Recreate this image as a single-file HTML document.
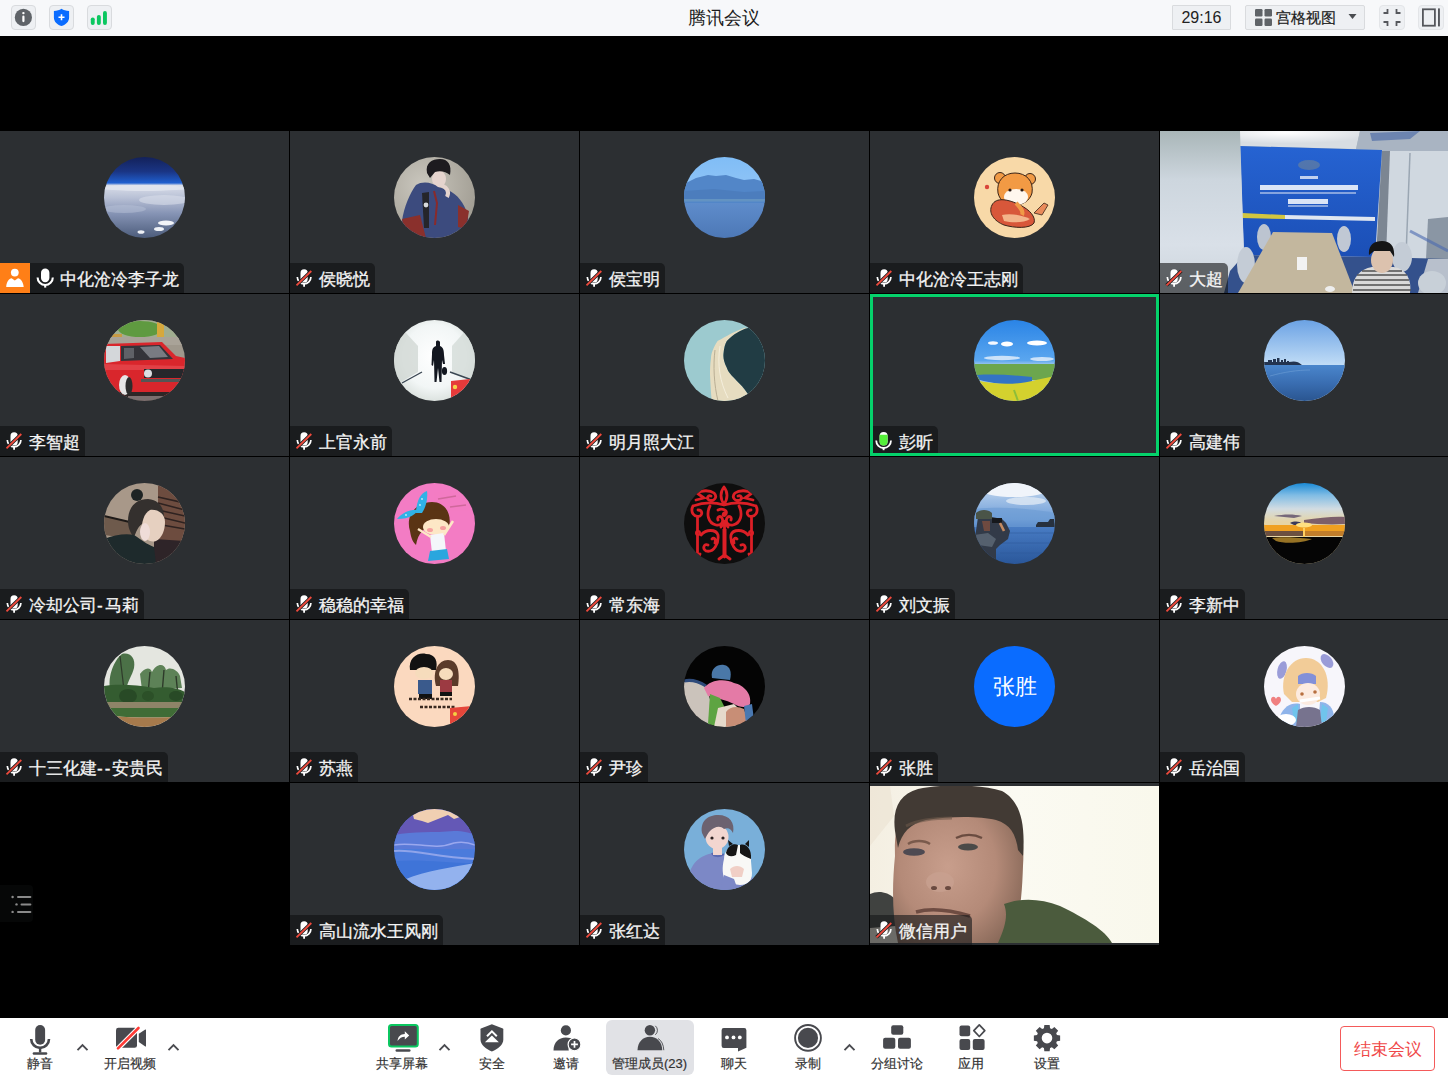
<!DOCTYPE html>
<html><head><meta charset="utf-8">
<style>
*{margin:0;padding:0;box-sizing:border-box}
html,body{width:1448px;height:1076px;overflow:hidden;background:#000;font-family:"Liberation Sans",sans-serif}
.abs{position:absolute}
#top{position:absolute;left:0;top:0;width:1448px;height:36px;background:#f7f8fa}
.tbtn{position:absolute;top:5px;height:25px;background:#eef0f3;border:1px solid #d9dbde;border-radius:4px}
.title{position:absolute;left:0;top:6px;width:1448px;text-align:center;font-size:17.5px;color:#1b1b1b;line-height:24px}
.tile{position:absolute;height:162px;background:#2c2f32;overflow:hidden}
.av{position:absolute;left:50%;margin-left:-40.5px;top:26px;width:81px;height:81px;border-radius:50%;overflow:hidden}
.lab{position:absolute;left:0;bottom:0;height:30px;background:#1a1c1e;border-top-right-radius:5px;padding-left:29px;padding-right:5px;white-space:nowrap}
.lab .mic{position:absolute;left:5px;top:6px}
.lab .nm{display:block;color:#f4f4f4;font-size:17px;line-height:30px;position:relative;top:2px;-webkit-text-stroke:0.3px #f4f4f4}
.lab.host{padding-left:60px}
.lab.host .hostbox{position:absolute;left:0;top:0;width:30px;height:30px;background:#ff7f17}
.lab.host .mic{left:36px;top:5px}
.lab.vid{background:rgba(22,24,26,.62)}
.hl{position:absolute;left:0;top:0;right:0;bottom:0;border:3px solid #05d26b}
#bar{position:absolute;left:0;top:1018px;width:1448px;height:58px;background:#fff}
.bl{position:absolute;top:1054px;font-size:13px;color:#333;line-height:20px;white-space:nowrap;-webkit-text-stroke:0.2px #333}
.caret{position:absolute;top:1043px}
</style></head><body>
<div id="top">
  <div class="tbtn" style="left:11px;width:25px"></div>
  <svg class="abs" style="left:11px;top:5px" width="25" height="25" viewBox="0 0 25 25"><circle cx="12.4" cy="12.4" r="8.6" fill="#5f6368"/><circle cx="12.4" cy="8.1" r="1.2" fill="#fff"/><rect x="11.3" y="10.6" width="2.2" height="6.6" rx="1.1" fill="#fff"/></svg>
  <div class="tbtn" style="left:49px;width:25px"></div>
  <svg class="abs" style="left:49px;top:5px" width="25" height="25" viewBox="0 0 25 25"><path d="M12.5 3.8 C10.5 5.2 8 5.9 4.9 6 V12.5 C4.9 16.6 8 19.7 12.5 21 C17 19.7 20.1 16.6 20.1 12.5 V6 C17 5.9 14.5 5.2 12.5 3.8 Z" fill="#0a6cff"/><path d="M12.5 9.3 V15.2 M9.5 12.3 H15.5" stroke="#fff" stroke-width="1.6"/></svg>
  <div class="tbtn" style="left:87px;width:25px"></div>
  <svg class="abs" style="left:87px;top:5px" width="25" height="25" viewBox="0 0 25 25"><rect x="3.8" y="12.4" width="3.9" height="7.5" rx="1.9" fill="#0bc760"/><rect x="9.9" y="9.9" width="3.9" height="10" rx="1.9" fill="#0bc760"/><rect x="16" y="6" width="3.9" height="13.9" rx="1.9" fill="#0bc760"/></svg>
  <div class="title">腾讯会议</div>
  <div class="tbtn" style="left:1172px;width:59px;border-radius:1px"></div>
  <div class="abs" style="left:1172px;top:5px;width:59px;text-align:center;font-size:16px;line-height:25px;color:#222">29:16</div>
  <div class="tbtn" style="left:1245px;width:120px;border-radius:2px"></div>
  <svg class="abs" style="left:1255px;top:9px" width="18" height="18" viewBox="0 0 18 18"><rect x="0" y="0" width="7.5" height="7.5" rx="1.2" fill="#5f6368"/><rect x="9.5" y="0" width="7.5" height="7.5" rx="1.2" fill="#5f6368"/><rect x="0" y="9.5" width="7.5" height="7.5" rx="1.2" fill="#5f6368"/><rect x="9.5" y="9.5" width="7.5" height="7.5" rx="1.2" fill="#5f6368"/></svg>
  <div class="abs" style="left:1276px;top:5px;font-size:15px;line-height:25px;color:#1b1b1b;-webkit-text-stroke:0.2px #1b1b1b">宫格视图</div>
  <svg class="abs" style="left:1348px;top:13px" width="9" height="7" viewBox="0 0 9 7"><path d="M0.5 1 H8.5 L4.5 6 Z" fill="#4a4c50"/></svg>
  <div class="tbtn" style="left:1379px;width:26px;border-color:#e3e5e8"></div>
  <svg class="abs" style="left:1379px;top:5px" width="26" height="25" viewBox="0 0 26 25"><path d="M8.5 4 V8 H4.5 M17.5 4 V8 H21.5 M8.5 21 V17 H4.5 M17.5 21 V17 H21.5" stroke="#55575c" stroke-width="1.8" fill="none"/></svg>
  <div class="tbtn" style="left:1418px;width:26px;border-color:#e3e5e8"></div>
  <svg class="abs" style="left:1418px;top:5px" width="26" height="25" viewBox="0 0 26 25"><rect x="4.9" y="4.3" width="12" height="16.4" stroke="#55575c" stroke-width="1.8" fill="none"/><rect x="20" y="3.4" width="1.9" height="18" fill="#55575c"/></svg>
</div>

<div class="tile" style="left:0px;top:131px;width:289px"><div class="av"><svg width="81" height="81" viewBox="0 0 81 81"><defs><linearGradient id="eg" x1="0" y1="0" x2="0" y2="1"><stop offset="0" stop-color="#13215a"/><stop offset=".18" stop-color="#1a3584"/><stop offset=".32" stop-color="#1f5fcf"/><stop offset=".35" stop-color="#d9dee9"/><stop offset=".5" stop-color="#b9c1d6"/><stop offset=".7" stop-color="#8593b4"/><stop offset="1" stop-color="#4c5c7b"/></linearGradient></defs><rect width="81" height="81" fill="url(#eg)"/>
<ellipse cx="40" cy="31" rx="45" ry="3" fill="#e2e6ef" opacity=".8"/>
<ellipse cx="60" cy="43" rx="25" ry="5" fill="#d9deea" opacity=".6"/>
<ellipse cx="20" cy="52" rx="22" ry="4" fill="#b8c2d8" opacity=".5"/>
<ellipse cx="62" cy="66" rx="8" ry="2.5" fill="#f2f4f8"/><ellipse cx="55" cy="72" rx="5" ry="2" fill="#eef1f6"/><ellipse cx="37" cy="75" rx="3.5" ry="1.8" fill="#eef1f6"/></svg></div><div class="lab host"><div class="hostbox"><svg width="30" height="30" viewBox="0 0 30 30"><circle cx="14.8" cy="9.6" r="3.9" fill="#fff"/><path d="M6.2 24 C6.5 18.5 9 15.6 11.6 15.2 L14.8 17.6 L18 15.2 C20.6 15.6 23.2 18.5 23.7 24 Z" fill="#fff"/></svg>
</div><svg class="mic" width="20" height="22" viewBox="0 0 20 22"><rect x="5" y="0.6" width="8.4" height="13.6" rx="4.2" fill="#fff"/><path d="M1.6 9.4 A7.6 7.6 0 0 0 16.8 9.4" stroke="#fff" stroke-width="2.1" fill="none"/><path d="M9.2 17 V19.6" stroke="#fff" stroke-width="2.1"/></svg>
<span class="nm">中化沧冷李子龙</span></div></div>
<div class="tile" style="left:290px;top:131px;width:289px"><div class="av"><svg width="81" height="81" viewBox="0 0 81 81"><defs><radialGradient id="bg1" cx=".35" cy=".35" r=".7"><stop offset="0" stop-color="#cac7be"/><stop offset="1" stop-color="#a29e94"/></radialGradient></defs><rect width="81" height="81" fill="url(#bg1)"/>
<ellipse cx="45" cy="22" rx="7" ry="8.5" fill="#e5d4ce"/>
<path d="M33 16 C31 6 38 2 46 2 C54 2 58 8 56 18 C52 15 47 13 41 15 L36 21 Z" fill="#1d1b1f"/>
<path d="M8 64 C10 50 16 36 22 28 C28 24 38 25 44 30 L54 33 C64 38 70 46 73 56 L76 70 L66 81 H14 Z" fill="#3c4b7e"/>
<path d="M8 62 L26 58 L32 81 H12 Z" fill="#8a302c"/><path d="M64 48 L75 54 L72 72 L64 70 Z" fill="#8a302c"/>
<path d="M28 36 L35 35 L35 71 L30 71 Z" fill="#25252a"/><circle cx="32" cy="48" r="2.4" fill="#d8dadc"/>
<path d="M40 34 L43 46 L41 68" stroke="#8a2a2a" stroke-width="2" fill="none"/>
<path d="M47 28 C52 30 56 34 53 40" stroke="#e5d4ce" stroke-width="4" fill="none"/></svg></div><div class="lab"><svg class="mic" width="18" height="20" viewBox="0 0 18 20"><rect x="5.5" y="0.3" width="7.2" height="13.2" rx="3.6" fill="#fff"/><path d="M2.3 8 A6.8 6.8 0 0 0 15.9 8" stroke="#fff" stroke-width="1.7" fill="none"/><path d="M9.1 15 V17.8" stroke="#fff" stroke-width="1.8"/><path d="M1.5 16.3 L16.3 2" stroke="#1a1c1e" stroke-width="3.4"/><path d="M1.5 16.3 L16.3 2" stroke="#ef4a3d" stroke-width="1.8"/></svg>
<span class="nm">侯晓悦</span></div></div>
<div class="tile" style="left:580px;top:131px;width:289px"><div class="av"><svg width="81" height="81" viewBox="0 0 81 81"><defs><linearGradient id="lg" x1="0" y1="0" x2="0" y2="1"><stop offset="0" stop-color="#80bdf6"/><stop offset=".3" stop-color="#8cc2f6"/><stop offset=".55" stop-color="#5f8dcc"/><stop offset="1" stop-color="#4d78b6"/></linearGradient></defs><rect width="81" height="81" fill="url(#lg)"/>
<path d="M0 27 L12 21 L24 18 L32 19 L42 18 L52 21 L60 23 L70 22 L81 25 V46 H0 Z" fill="#5286c8"/>
<path d="M0 34 L30 32 L60 35 L81 34 V44 H0 Z" fill="#4c7dbd"/>
<rect y="42" width="81" height="2.5" fill="#6e9cc4" opacity=".7"/></svg></div><div class="lab"><svg class="mic" width="18" height="20" viewBox="0 0 18 20"><rect x="5.5" y="0.3" width="7.2" height="13.2" rx="3.6" fill="#fff"/><path d="M2.3 8 A6.8 6.8 0 0 0 15.9 8" stroke="#fff" stroke-width="1.7" fill="none"/><path d="M9.1 15 V17.8" stroke="#fff" stroke-width="1.8"/><path d="M1.5 16.3 L16.3 2" stroke="#1a1c1e" stroke-width="3.4"/><path d="M1.5 16.3 L16.3 2" stroke="#ef4a3d" stroke-width="1.8"/></svg>
<span class="nm">侯宝明</span></div></div>
<div class="tile" style="left:870px;top:131px;width:289px"><div class="av"><svg width="81" height="81" viewBox="0 0 81 81"><defs></defs><rect width="81" height="81" fill="#f8d9a8"/>
<circle cx="26" cy="21" r="5.5" fill="#f09a46" stroke="#3a2418" stroke-width="1"/><circle cx="56" cy="22" r="5.5" fill="#f09a46" stroke="#3a2418" stroke-width="1"/>
<path d="M24 36 C22 24 30 16 41 16 C52 16 60 24 58 36 C56 44 48 48 41 48 C32 48 26 44 24 36 Z" fill="#f29a44" stroke="#3a2418" stroke-width="1"/>
<ellipse cx="42" cy="40" rx="12" ry="8" fill="#fff7ee"/>
<circle cx="36" cy="33" r="1.6" fill="#2a1a14"/><circle cx="48" cy="33" r="1.6" fill="#2a1a14"/>
<path d="M18 48 C22 40 34 42 46 48 C56 53 62 60 60 66 C56 72 40 71 30 68 C20 64 14 56 18 48 Z" fill="#d8573a" stroke="#3a2418" stroke-width="1"/>
<path d="M28 58 C36 56 48 58 56 62 C50 66 38 66 30 64 Z" fill="#f3b48a"/>
<path d="M60 56 L70 46 L74 48 L68 58 Z" fill="#e98a5a" stroke="#3a2418" stroke-width=".8"/>
<path d="M42 46 C46 50 50 54 48 58" stroke="#f09a46" stroke-width="4" fill="none"/>
<circle cx="13" cy="30" r="2.2" fill="#d9453a"/></svg></div><div class="lab"><svg class="mic" width="18" height="20" viewBox="0 0 18 20"><rect x="5.5" y="0.3" width="7.2" height="13.2" rx="3.6" fill="#fff"/><path d="M2.3 8 A6.8 6.8 0 0 0 15.9 8" stroke="#fff" stroke-width="1.7" fill="none"/><path d="M9.1 15 V17.8" stroke="#fff" stroke-width="1.8"/><path d="M1.5 16.3 L16.3 2" stroke="#1a1c1e" stroke-width="3.4"/><path d="M1.5 16.3 L16.3 2" stroke="#ef4a3d" stroke-width="1.8"/></svg>
<span class="nm">中化沧冷王志刚</span></div></div>
<div class="tile" style="left:1160px;top:131px;width:288px"><svg class="abs" style="left:0;top:0" width="288" height="162" viewBox="0 0 288 162"><defs>
<linearGradient id="ow" x1="0" y1="0" x2="0" y2="1"><stop offset="0" stop-color="#a9b6b8"/><stop offset=".3" stop-color="#cdd6de"/><stop offset=".7" stop-color="#d9e0e8"/><stop offset="1" stop-color="#ccd4dc"/></linearGradient>
<linearGradient id="ob" x1="0" y1="0" x2="0" y2="1"><stop offset="0" stop-color="#2663d2"/><stop offset="1" stop-color="#1b4fb6"/></linearGradient>
<radialGradient id="ol" cx=".5" cy=".1" r=".6"><stop offset="0" stop-color="#ffffff"/><stop offset="1" stop-color="#d8dde2"/></radialGradient>
</defs>
<rect width="288" height="162" fill="url(#ow)"/>
<path d="M50 0 H200 L196 18 L80 15 Z" fill="url(#ol)"/>
<path d="M200 0 H288 V22 L224 20 L196 18 Z" fill="#a9b4c2"/><path d="M210 2 L260 0 L250 8 L212 10 Z" fill="#6c84b0"/>
<path d="M222 20 H288 V130 L222 126 Z" fill="#d0d8e0"/>
<path d="M222 20 L230 20 L226 126 L216 126 Z" fill="#7c8692"/>
<path d="M250 22 L246 125" stroke="#9aa6b2" stroke-width="1.5"/>
<path d="M268 88 L288 86 V130 L266 128 Z" fill="#8a96a4"/>
<path d="M250 100 L288 120" stroke="#4a6ab0" stroke-width="3" opacity=".6"/>
<path d="M80 15 L222 19 L215 126 L84 124 Z" fill="url(#ob)"/>
<path d="M82 82 L125 84 L125 88 L82 87 Z" fill="#d2c640"/><path d="M125 84 L215 86 L215 90 L125 88 Z" fill="#dfe6f0"/>
<ellipse cx="149" cy="34" rx="11" ry="5" fill="#a8a070" opacity=".35"/>
<rect x="140" y="45" width="18" height="3" fill="#e8eef8" opacity=".8"/>
<rect x="100" y="54" width="98" height="5" fill="#eef3fb" opacity=".9"/><rect x="100" y="61" width="96" height="2" fill="#c8d6f0" opacity=".6"/>
<rect x="128" y="68" width="40" height="5" fill="#eef3fb" opacity=".9"/><rect x="128" y="74" width="40" height="2" fill="#c8d6f0" opacity=".6"/>
<path d="M0 0 H80 L84 124 L70 140 L64 162 H0 Z" fill="url(#ow)"/>

<path d="M84 124 L215 126 L288 128 V162 H64 L70 140 Z" fill="#34518c"/>
<path d="M268 128 L288 128 V162 L258 162 Z" fill="#b8c0cc"/>
<ellipse cx="104" cy="106" rx="7" ry="13" fill="#bcc4d0"/><ellipse cx="184" cy="108" rx="7" ry="13" fill="#c0c8d4"/>
<ellipse cx="86" cy="134" rx="9" ry="18" fill="#c4ccd6"/><ellipse cx="242" cy="126" rx="10" ry="15" fill="#c4ccd6"/>
<ellipse cx="272" cy="152" rx="14" ry="12" fill="#c8d0d8"/>
<path d="M113 101 L172 102 L195 162 L78 162 Z" fill="#c3b79e"/>
<rect x="137" y="126" width="10" height="13" fill="#f2f2f2"/>
<ellipse cx="170" cy="158" rx="5" ry="3" fill="#eeeeee"/>
<path d="M192 162 C192 146 200 138 212 136 L234 136 C246 138 252 148 250 162 Z" fill="#dadada"/>
<path d="M197 144 H247 M195 149 H249 M194 154 H250 M193 159 H251 M202 140 H242" stroke="#505050" stroke-width="1.4"/>
<ellipse cx="222" cy="129" rx="11" ry="13" fill="#dcc2ae"/>
<path d="M209 124 C208 114 214 110 222 110 C231 110 235 116 234 126 L230 120 L214 120 Z" fill="#151515"/>
</svg><div class="lab vid"><svg class="mic" width="18" height="20" viewBox="0 0 18 20"><rect x="5.5" y="0.3" width="7.2" height="13.2" rx="3.6" fill="#fff"/><path d="M2.3 8 A6.8 6.8 0 0 0 15.9 8" stroke="#fff" stroke-width="1.7" fill="none"/><path d="M9.1 15 V17.8" stroke="#fff" stroke-width="1.8"/><path d="M1.5 16.3 L16.3 2" stroke="#1a1c1e" stroke-width="3.4"/><path d="M1.5 16.3 L16.3 2" stroke="#ef4a3d" stroke-width="1.8"/></svg>
<span class="nm">大超</span></div></div>
<div class="tile" style="left:0px;top:294px;width:289px"><div class="av"><svg width="81" height="81" viewBox="0 0 81 81"><defs></defs><rect width="81" height="81" fill="#9f988c"/>
<rect width="81" height="20" fill="#a0ad90"/><ellipse cx="36" cy="9" rx="22" ry="8" fill="#5f9a40"/>
<rect x="53" y="2" width="7" height="20" fill="#d6a83c"/><rect x="8" y="14" width="10" height="8" fill="#c89a44"/>
<rect x="0" y="17" width="81" height="8" fill="#a9a398"/>
<path d="M0 24 L58 22 L72 36 L81 38 V76 H0 Z" fill="#d9262c"/>
<path d="M2 26 L16 26 L16 41 L2 43 Z" fill="#d4d7da"/>
<path d="M17 26 L56 25 L69 39 L17 41 Z" fill="#34343a"/>
<path d="M36 27 L55 26 L64 37 L46 38 Z" fill="#a8acb2" opacity=".6"/><path d="M20 28 L30 28 L30 38 L20 39 Z" fill="#8a8e94" opacity=".5"/>
<path d="M0 44 L81 46 V50 L0 50 Z" fill="#ec5a60" opacity=".5"/>
<rect x="40" y="49" width="41" height="9" fill="#26272b"/><circle cx="44" cy="53.5" r="4" fill="#dcdee2"/>
<rect x="37" y="59" width="44" height="3" fill="#555"/>
<rect x="0" y="72" width="81" height="9" fill="#2e2626"/>
<ellipse cx="21" cy="65" rx="6" ry="10" fill="#e6e6e6"/><ellipse cx="25" cy="66" rx="3.5" ry="9" fill="#2c2c2c"/>
<rect x="24" y="76" width="52" height="5" fill="#7c6f6f"/></svg></div><div class="lab"><svg class="mic" width="18" height="20" viewBox="0 0 18 20"><rect x="5.5" y="0.3" width="7.2" height="13.2" rx="3.6" fill="#fff"/><path d="M2.3 8 A6.8 6.8 0 0 0 15.9 8" stroke="#fff" stroke-width="1.7" fill="none"/><path d="M9.1 15 V17.8" stroke="#fff" stroke-width="1.8"/><path d="M1.5 16.3 L16.3 2" stroke="#1a1c1e" stroke-width="3.4"/><path d="M1.5 16.3 L16.3 2" stroke="#ef4a3d" stroke-width="1.8"/></svg>
<span class="nm">李智超</span></div></div>
<div class="tile" style="left:290px;top:294px;width:289px"><div class="av"><svg width="81" height="81" viewBox="0 0 81 81"><defs><radialGradient id="tg" cx=".5" cy=".45" r=".6"><stop offset="0" stop-color="#ffffff"/><stop offset=".65" stop-color="#f2f6f6"/><stop offset="1" stop-color="#d6ddd9"/></radialGradient></defs><rect width="81" height="81" fill="url(#tg)"/>
<path d="M0 0 L24 26 L24 52 L0 66 Z" fill="#cfd6d2" opacity=".75"/><path d="M81 0 L58 26 L58 52 L81 62 Z" fill="#d2d9d5" opacity=".75"/>
<path d="M8 63 L28 52" stroke="#3a4652" stroke-width="1.4"/><path d="M56 52 L78 60" stroke="#3a4652" stroke-width="1.4"/>
<path d="M42 22 C42 20 45 20 46 22 L46 26 C49 27 50 30 50 35 L51 44 L49 44 L48 40 L47.5 62 L45.5 62 L44 48 L42.5 62 L40.5 62 L40 40 L39 46 L37.5 45 L38 34 C38 29 39 27 42 26 Z" fill="#131720"/>
<ellipse cx="50.5" cy="51" rx="2.6" ry="4" fill="#131720"/>
<path d="M57 61 L76 59 L71 76 L57 80 Z" fill="#e63a3a"/><circle cx="61" cy="67" r="2.2" fill="#f6d24a"/></svg></div><div class="lab"><svg class="mic" width="18" height="20" viewBox="0 0 18 20"><rect x="5.5" y="0.3" width="7.2" height="13.2" rx="3.6" fill="#fff"/><path d="M2.3 8 A6.8 6.8 0 0 0 15.9 8" stroke="#fff" stroke-width="1.7" fill="none"/><path d="M9.1 15 V17.8" stroke="#fff" stroke-width="1.8"/><path d="M1.5 16.3 L16.3 2" stroke="#1a1c1e" stroke-width="3.4"/><path d="M1.5 16.3 L16.3 2" stroke="#ef4a3d" stroke-width="1.8"/></svg>
<span class="nm">上官永前</span></div></div>
<div class="tile" style="left:580px;top:294px;width:289px"><div class="av"><svg width="81" height="81" viewBox="0 0 81 81"><defs></defs><rect width="81" height="81" fill="#9ccacf"/>
<path d="M61 7.7 C48 12 36 20 33.6 21 C29 28 27 34 27 38 C26 45 26 50 26 54.5 C26.5 66 27 74 27.8 81 H70 C68 78 66 76 63.7 73.8 C60 68 56 64 52.9 61 C48 56 44 52 42.8 47.8 C40 42 39 38 39.5 33.6 C40 28 41 24 42.8 21 C50 14 56 10 64 8 Z" fill="#e6dcc0"/>
<path d="M64 8 C56 10 50 14 42.8 21 C41 24 40 28 39.5 33.6 C39 38 40 42 42.8 47.8 C44 52 48 56 52.9 61 C56 64 60 68 63.7 73.8 C66 76 68 78 70 81 H81 V0 Z" fill="#213c44"/>
<path d="M31 30 C29 45 30 65 34 81" stroke="#b9ae94" stroke-width="1" fill="none"/><path d="M36 26 C33 45 36 62 44 78" stroke="#f4eedc" stroke-width="1" fill="none"/></svg></div><div class="lab"><svg class="mic" width="18" height="20" viewBox="0 0 18 20"><rect x="5.5" y="0.3" width="7.2" height="13.2" rx="3.6" fill="#fff"/><path d="M2.3 8 A6.8 6.8 0 0 0 15.9 8" stroke="#fff" stroke-width="1.7" fill="none"/><path d="M9.1 15 V17.8" stroke="#fff" stroke-width="1.8"/><path d="M1.5 16.3 L16.3 2" stroke="#1a1c1e" stroke-width="3.4"/><path d="M1.5 16.3 L16.3 2" stroke="#ef4a3d" stroke-width="1.8"/></svg>
<span class="nm">明月照大江</span></div></div>
<div class="tile" style="left:870px;top:294px;width:289px"><div class="av"><svg width="81" height="81" viewBox="0 0 81 81"><defs><linearGradient id="fg" x1="0" y1="0" x2="0" y2="1"><stop offset="0" stop-color="#2a84e6"/><stop offset=".5" stop-color="#5aa6ef"/><stop offset=".55" stop-color="#9cc6ee"/></linearGradient></defs><rect width="81" height="81" fill="url(#fg)"/>
<ellipse cx="33" cy="24" rx="6" ry="2.5" fill="#fff"/><ellipse cx="63" cy="23" rx="10" ry="2.6" fill="#fff"/><ellipse cx="19" cy="23" rx="5" ry="1.8" fill="#f4f8ff"/>
<ellipse cx="28" cy="38" rx="18" ry="2.2" fill="#e9f1fb" opacity=".8"/><ellipse cx="68" cy="39" rx="12" ry="2" fill="#e9f1fb" opacity=".8"/>
<path d="M0 44 H81 V60 H0 Z" fill="#6ca64e"/>
<path d="M3 55 C20 54 40 55 58 57 L58 63 C40 66 20 64 6 60 Z" fill="#3374c4"/>
<path d="M0 60 C20 64 40 66 62 60 L81 56 V81 H0 Z" fill="#d4d12e"/>
<path d="M40 70 L44 81" stroke="#8cbd3a" stroke-width="2"/></svg></div><div class="lab"><svg class="mic" style="top:5px" width="18" height="20" viewBox="0 0 18 20"><rect x="4.6" y="1" width="8" height="13.4" rx="4" fill="#fff"/><path d="M4.6 3.8 H12.6 V10.4 A4 4 0 0 1 4.6 10.4 Z" fill="#55f03a"/><path d="M1.2 9.6 A7.3 7.3 0 0 0 16 9.6" stroke="#fff" stroke-width="1.8" fill="none"/><path d="M8.6 16.9 V19.2" stroke="#fff" stroke-width="1.9"/></svg>
<span class="nm">彭昕</span></div><div class="hl"></div></div>
<div class="tile" style="left:1160px;top:294px;width:288px"><div class="av"><svg width="81" height="81" viewBox="0 0 81 81"><defs><linearGradient id="sg" x1="0" y1="0" x2="0" y2="1"><stop offset="0" stop-color="#6ba2e4"/><stop offset=".55" stop-color="#c0dcf6"/></linearGradient>
<linearGradient id="sw" x1="0" y1="0" x2="0" y2="1"><stop offset="0" stop-color="#4a86cc"/><stop offset=".5" stop-color="#3a6eb2"/><stop offset="1" stop-color="#2a5590"/></linearGradient></defs><rect width="81" height="81" fill="url(#sg)"/>
<path d="M0 42 H4 V40 H8 V42 H9 V39 H12 V42 H13 V38 H15.5 V42 H17 V40 H19 V42 H20 V39 H22 V42 H23 V41 H25 V42 C30 41 34 41 38 45 H0 Z" fill="#233450"/>
<rect y="45" width="81" height="36" fill="url(#sw)"/>
<path d="M6 56 C20 52 34 50 46 50" stroke="#7aa8dc" stroke-width=".8" fill="none" opacity=".6"/></svg></div><div class="lab"><svg class="mic" width="18" height="20" viewBox="0 0 18 20"><rect x="5.5" y="0.3" width="7.2" height="13.2" rx="3.6" fill="#fff"/><path d="M2.3 8 A6.8 6.8 0 0 0 15.9 8" stroke="#fff" stroke-width="1.7" fill="none"/><path d="M9.1 15 V17.8" stroke="#fff" stroke-width="1.8"/><path d="M1.5 16.3 L16.3 2" stroke="#1a1c1e" stroke-width="3.4"/><path d="M1.5 16.3 L16.3 2" stroke="#ef4a3d" stroke-width="1.8"/></svg>
<span class="nm">高建伟</span></div></div>
<div class="tile" style="left:0px;top:457px;width:289px"><div class="av"><svg width="81" height="81" viewBox="0 0 81 81"><defs></defs><rect width="81" height="81" fill="#a89889"/>
<path d="M54 2 L81 10 V60 L54 60 Z" fill="#6d4c3f"/>
<path d="M54 14 L81 20 M54 20 L81 27 M54 27 L81 33 M56 34 L81 40 M58 42 L81 46" stroke="#2e2220" stroke-width="1.6"/>
<path d="M0 33 L30 40 L30 56 L0 52 Z" fill="#6e5a4c"/><path d="M0 33 L30 40" stroke="#1e1a18" stroke-width="2"/>
<path d="M50 56 L81 58 V81 H50 Z" fill="#2e2428"/>
<circle cx="33" cy="12" r="6" fill="#1e2424"/>
<path d="M24 38 C24 24 32 16 44 16 C56 17 60 26 60 34 L58 44 C54 40 46 38 40 40 C34 42 32 50 30 54 C26 50 24 44 24 38 Z" fill="#34302e"/>
<path d="M46 27 C54 26 61 31 61 39 C61 47 58 55 52 58 C46 60 40 56 38 48 C37 40 40 30 46 27 Z" fill="#e6d0c0"/>
<ellipse cx="41" cy="49" rx="5" ry="9" fill="#efdcd8"/>
<path d="M0 56 C10 52 22 50 30 52 C36 56 44 62 50 64 L52 81 H0 Z" fill="#1e2a2c"/></svg></div><div class="lab"><svg class="mic" width="18" height="20" viewBox="0 0 18 20"><rect x="5.5" y="0.3" width="7.2" height="13.2" rx="3.6" fill="#fff"/><path d="M2.3 8 A6.8 6.8 0 0 0 15.9 8" stroke="#fff" stroke-width="1.7" fill="none"/><path d="M9.1 15 V17.8" stroke="#fff" stroke-width="1.8"/><path d="M1.5 16.3 L16.3 2" stroke="#1a1c1e" stroke-width="3.4"/><path d="M1.5 16.3 L16.3 2" stroke="#ef4a3d" stroke-width="1.8"/></svg>
<span class="nm">冷却公司<span style="letter-spacing:2px">-</span>马莉</span></div></div>
<div class="tile" style="left:290px;top:457px;width:289px"><div class="av"><svg width="81" height="81" viewBox="0 0 81 81"><defs></defs><rect width="81" height="81" fill="#f37cc4"/>
<path d="M16 48 C12 36 18 20 38 19 C52 19 58 32 55 44 L40 42 C30 44 24 50 22 62 C18 58 17 54 16 48 Z" fill="#5a3414"/>
<path d="M22 30 C22 20 26 10 33 8 C34 16 32 24 28 30 Z" fill="#30b2e6"/>
<path d="M3 36 C8 30 16 26 24 27 C22 31 16 36 3 36 Z" fill="#30b2e6"/>
<circle cx="28" cy="16" r=".9" fill="#c8ecfb"/><circle cx="26" cy="22" r=".9" fill="#c8ecfb"/><circle cx="12" cy="32" r=".9" fill="#c8ecfb"/>
<ellipse cx="42" cy="44" rx="13" ry="8" fill="#fde7c6"/>
<ellipse cx="36" cy="47" rx="3" ry="2" fill="#f6a0a0"/><ellipse cx="49" cy="45" rx="3" ry="2" fill="#f6a0a0"/>
<path d="M36 52 L50 50 L52 68 L38 70 Z" fill="#f4f6fa"/><path d="M36 68 L53 66 L55 76 L34 78 Z" fill="#2aa6de"/>
<path d="M50 52 L59 38" stroke="#fde7c6" stroke-width="2.5"/><path d="M37 54 L24 46" stroke="#fde7c6" stroke-width="2.5"/>
<path d="M44 16 L62 13 M56 24 L72 22" stroke="#a4506a" stroke-width="1.6" opacity=".45"/></svg></div><div class="lab"><svg class="mic" width="18" height="20" viewBox="0 0 18 20"><rect x="5.5" y="0.3" width="7.2" height="13.2" rx="3.6" fill="#fff"/><path d="M2.3 8 A6.8 6.8 0 0 0 15.9 8" stroke="#fff" stroke-width="1.7" fill="none"/><path d="M9.1 15 V17.8" stroke="#fff" stroke-width="1.8"/><path d="M1.5 16.3 L16.3 2" stroke="#1a1c1e" stroke-width="3.4"/><path d="M1.5 16.3 L16.3 2" stroke="#ef4a3d" stroke-width="1.8"/></svg>
<span class="nm">稳稳的幸福</span></div></div>
<div class="tile" style="left:580px;top:457px;width:289px"><div class="av"><svg width="81" height="81" viewBox="0 0 81 81"><defs></defs><rect width="81" height="81" fill="#0e0e0e"/>
<path d="M13 10 C18 7 26 7 30 10 C34 14 30 19 25 17 C22 15 24 12 27 13 M13 10 L20 15 L12 17 M68 10 C63 7 55 7 51 10 C47 14 51 19 56 17 C59 15 57 12 54 13 M68 10 L61 15 L69 17 M40 4 C36 9 36 16 40 21 C44 16 44 9 40 4 M9 23 C20 19 30 19 40 22 C50 19 61 19 72 23 M9 23 C6 29 10 35 16 33 C19 31 18 27 14 27 M72 23 C75 29 71 35 65 33 C62 31 63 27 67 27 M13.5 34 V72 M67.5 34 V72 M11 71 L13.5 76 L16 71 M65 71 L67.5 76 L70 71 M26 23 C22 31 24 40 32 42 C37 43 40 39 38 35 C36 32 33 34 34 37 M55 23 C59 31 57 40 49 42 C44 43 41 39 43 35 C45 32 48 34 47 37 M34 27 C38 25 44 27 42 31 C40 34 38 32 40 30 M40.5 40 V74 M37 44 L40.5 39 L44 44 M35 76 L40.5 72 L46 76 M17 52 C22 46 32 46 34 52 C35 60 30 70 22 68 C18 66 20 60 24 62 M64 52 C59 46 49 46 47 52 C46 60 51 70 59 68 C63 66 61 60 57 62 M28 56 C30 54 32 56 31 60 M53 56 C51 54 49 56 50 60" stroke="#dc1f26" stroke-width="2.8" fill="none" stroke-linecap="round"/><rect x="38.5" y="46" width="4" height="26" fill="#dc1f26"/>
<circle cx="14" cy="50" r="2" fill="none" stroke="#dc1f26" stroke-width="2"/><circle cx="67" cy="50" r="2" fill="none" stroke="#dc1f26" stroke-width="2"/></svg></div><div class="lab"><svg class="mic" width="18" height="20" viewBox="0 0 18 20"><rect x="5.5" y="0.3" width="7.2" height="13.2" rx="3.6" fill="#fff"/><path d="M2.3 8 A6.8 6.8 0 0 0 15.9 8" stroke="#fff" stroke-width="1.7" fill="none"/><path d="M9.1 15 V17.8" stroke="#fff" stroke-width="1.8"/><path d="M1.5 16.3 L16.3 2" stroke="#1a1c1e" stroke-width="3.4"/><path d="M1.5 16.3 L16.3 2" stroke="#ef4a3d" stroke-width="1.8"/></svg>
<span class="nm">常东海</span></div></div>
<div class="tile" style="left:870px;top:457px;width:289px"><div class="av"><svg width="81" height="81" viewBox="0 0 81 81"><defs><linearGradient id="so" x1="0" y1="0" x2="0" y2="1"><stop offset="0" stop-color="#d6e2f0"/><stop offset=".2" stop-color="#a0c0e6"/><stop offset=".45" stop-color="#6f9ed8"/><stop offset=".52" stop-color="#4a7ec6"/><stop offset="1" stop-color="#2a579a"/></linearGradient></defs><rect width="81" height="81" fill="url(#so)"/>
<ellipse cx="40" cy="6" rx="34" ry="8" fill="#f0f4fa"/><ellipse cx="52" cy="18" rx="20" ry="4" fill="#dfe8f4" opacity=".8"/>
<path d="M0 26 C20 24 50 24 81 30 V44 H0 Z" fill="#6d9cd4" opacity=".7"/>
<path d="M62 42 L64 39 L74 39 L76 36 L80 36 L81 44 H62 Z" fill="#27313f"/>
<path d="M10 50 H81 M20 60 H81 M26 70 H81" stroke="#2d5796" stroke-width="1" opacity=".5"/>
<path d="M4 34 C4 30 8 28 12 28 C16 28 18 30 18 34 L28 36 L32 40 L36 48 L34 56 L26 62 L22 66 L22 81 H6 L0 62 L2 48 Z" fill="#323a48"/>
<path d="M2 30 C6 26 14 26 18 30 L18 36 L2 36 Z" fill="#4a5448"/>
<path d="M8 38 L16 38 L16 48 L10 48 Z" fill="#6e4a40"/>
<rect x="18" y="35" width="10" height="5" fill="#16181c"/>
<path d="M0 52 L14 50 L22 56 L18 64 L4 62 Z" fill="#5e6a78" opacity=".8"/>
<path d="M26 40 L30 48" stroke="#c48a60" stroke-width="2.6"/></svg></div><div class="lab"><svg class="mic" width="18" height="20" viewBox="0 0 18 20"><rect x="5.5" y="0.3" width="7.2" height="13.2" rx="3.6" fill="#fff"/><path d="M2.3 8 A6.8 6.8 0 0 0 15.9 8" stroke="#fff" stroke-width="1.7" fill="none"/><path d="M9.1 15 V17.8" stroke="#fff" stroke-width="1.8"/><path d="M1.5 16.3 L16.3 2" stroke="#1a1c1e" stroke-width="3.4"/><path d="M1.5 16.3 L16.3 2" stroke="#ef4a3d" stroke-width="1.8"/></svg>
<span class="nm">刘文振</span></div></div>
<div class="tile" style="left:1160px;top:457px;width:288px"><div class="av"><svg width="81" height="81" viewBox="0 0 81 81"><defs><linearGradient id="su" x1="0" y1="0" x2="0" y2="1"><stop offset="0" stop-color="#1a8ad6"/><stop offset=".15" stop-color="#80bce4"/><stop offset=".32" stop-color="#d2dce2"/><stop offset=".48" stop-color="#e6d4a4"/></linearGradient></defs><rect width="81" height="81" fill="url(#su)"/>
<path d="M10 33 C20 31 30 31 38 33 L30 35 Z" fill="#5c4c68" opacity=".8"/>
<path d="M40 37 C56 35 70 33 81 34 V41 C66 42 52 41 40 40 Z" fill="#6a4a5e" opacity=".85"/>
<path d="M26 40 C30 38 36 38 38 41 L32 43 Z" fill="#3c3a5a"/>
<path d="M0 42 H81 V50 H0 Z" fill="#f0a020"/><ellipse cx="40" cy="42" rx="8" ry="2.5" fill="#ffe080"/>
<path d="M0 48 H81 V53 H0 Z" fill="#6c5040"/><path d="M40 48 H81 V53 H40 Z" fill="#d88a24" opacity=".8"/>
<rect x="39" y="45" width="2" height="9" fill="#ffd060"/>
<rect y="54" width="81" height="27" fill="#050505"/>
<path d="M8 55 C14 54 30 54 48 56 C40 60 20 61 12 58 Z" fill="#c89830" opacity=".75"/></svg></div><div class="lab"><svg class="mic" width="18" height="20" viewBox="0 0 18 20"><rect x="5.5" y="0.3" width="7.2" height="13.2" rx="3.6" fill="#fff"/><path d="M2.3 8 A6.8 6.8 0 0 0 15.9 8" stroke="#fff" stroke-width="1.7" fill="none"/><path d="M9.1 15 V17.8" stroke="#fff" stroke-width="1.8"/><path d="M1.5 16.3 L16.3 2" stroke="#1a1c1e" stroke-width="3.4"/><path d="M1.5 16.3 L16.3 2" stroke="#ef4a3d" stroke-width="1.8"/></svg>
<span class="nm">李新中</span></div></div>
<div class="tile" style="left:0px;top:620px;width:289px"><div class="av"><svg width="81" height="81" viewBox="0 0 81 81"><defs></defs><rect width="81" height="81" fill="#e4e6e0"/>
<path d="M6 42 C4 30 10 14 18 8 C26 6 32 12 30 22 C28 30 24 34 22 44 Z" fill="#3a6436" opacity=".9"/>
<path d="M16 10 L20 44" stroke="#2e3a2a" stroke-width="1.2"/>
<path d="M36 28 C40 22 46 20 48 26 C52 18 60 16 62 24 C66 20 74 24 76 30 L78 42 L38 44 Z" fill="#45703e" opacity=".85"/>
<path d="M46 26 L44 48 M60 24 L58 48 M72 30 L74 50" stroke="#2e3a2a" stroke-width="1.4"/>
<path d="M0 40 C10 38 30 38 50 42 C62 40 74 42 81 46 V62 H0 Z" fill="#345c30"/>
<ellipse cx="24" cy="50" rx="9" ry="7" fill="#284a26"/><ellipse cx="72" cy="50" rx="7" ry="5" fill="#284a26"/><ellipse cx="44" cy="50" rx="6" ry="5" fill="#2c5028"/>
<rect y="56" width="81" height="6" fill="#8e8468"/>
<path d="M6 62 H81 V70 C60 72 30 72 10 70 Z" fill="#406c36"/>
<path d="M10 70 C30 72 60 72 81 70 V81 H10 Z" fill="#a67a4c"/></svg></div><div class="lab"><svg class="mic" width="18" height="20" viewBox="0 0 18 20"><rect x="5.5" y="0.3" width="7.2" height="13.2" rx="3.6" fill="#fff"/><path d="M2.3 8 A6.8 6.8 0 0 0 15.9 8" stroke="#fff" stroke-width="1.7" fill="none"/><path d="M9.1 15 V17.8" stroke="#fff" stroke-width="1.8"/><path d="M1.5 16.3 L16.3 2" stroke="#1a1c1e" stroke-width="3.4"/><path d="M1.5 16.3 L16.3 2" stroke="#ef4a3d" stroke-width="1.8"/></svg>
<span class="nm">十三化建<span style="letter-spacing:2px">-</span><span style="letter-spacing:2px">-</span>安贵民</span></div></div>
<div class="tile" style="left:290px;top:620px;width:289px"><div class="av"><svg width="81" height="81" viewBox="0 0 81 81"><defs></defs><rect width="81" height="81" fill="#fbd9bf"/>
<path d="M16 24 C14 12 24 6 32 8 C42 8 44 16 42 24 Z" fill="#121212"/>
<ellipse cx="30" cy="27" rx="9" ry="6" fill="#f6dcbc"/>
<path d="M42 40 C38 26 44 14 54 14 C64 14 66 26 64 40 Z" fill="#5b3b2a"/>
<ellipse cx="52" cy="28" rx="7" ry="6" fill="#f6dcbc"/>
<path d="M24 34 L38 34 L38 48 L24 48 Z" fill="#3a5a8c"/><rect x="25" y="48" width="13" height="5" fill="#111"/>
<path d="M46 34 L58 34 L58 46 L46 46 Z" fill="#9c3a42"/><rect x="46" y="46" width="12" height="4" fill="#111"/>
<path d="M15 53 H58 M26 61 H62" stroke="#3a2a20" stroke-width="2.4" stroke-dasharray="3 1.5"/>
<path d="M56 62 L78 60 L70 80 L56 80 Z" fill="#e5463a"/><circle cx="61" cy="68" r="2" fill="#f4cf42"/></svg></div><div class="lab"><svg class="mic" width="18" height="20" viewBox="0 0 18 20"><rect x="5.5" y="0.3" width="7.2" height="13.2" rx="3.6" fill="#fff"/><path d="M2.3 8 A6.8 6.8 0 0 0 15.9 8" stroke="#fff" stroke-width="1.7" fill="none"/><path d="M9.1 15 V17.8" stroke="#fff" stroke-width="1.8"/><path d="M1.5 16.3 L16.3 2" stroke="#1a1c1e" stroke-width="3.4"/><path d="M1.5 16.3 L16.3 2" stroke="#ef4a3d" stroke-width="1.8"/></svg>
<span class="nm">苏燕</span></div></div>
<div class="tile" style="left:580px;top:620px;width:289px"><div class="av"><svg width="81" height="81" viewBox="0 0 81 81"><defs></defs><rect width="81" height="81" fill="#040404"/>
<path d="M28 32 C26 22 34 18 40 19 C46 20 48 26 46 34 Z" fill="#4a78a8"/>
<path d="M0 36 L10 34 L22 40 L28 60 L26 81 H0 Z" fill="#cbc3bb"/>
<path d="M0 35 C8 33 14 35 22 40" stroke="#2e4a7a" stroke-width="3" fill="none"/>
<path d="M20 42 C26 34 40 32 50 37 C60 39 68 48 66 58 C64 62 56 62 50 58 C42 54 32 52 24 50 Z" fill="#e47aa6"/>
<path d="M26 48 L36 52 L40 60 L34 81 L24 78 Z" fill="#5ea442"/>
<path d="M34 62 L50 58 L58 66 L52 81 L30 81 Z" fill="#e6dacb"/>
<path d="M42 66 C46 60 54 60 60 63 L64 76 L54 81 L42 81 Z" fill="#c88e76"/>
<path d="M60 60 L68 58 L70 74 L62 78 Z" fill="#4a78b0"/></svg></div><div class="lab"><svg class="mic" width="18" height="20" viewBox="0 0 18 20"><rect x="5.5" y="0.3" width="7.2" height="13.2" rx="3.6" fill="#fff"/><path d="M2.3 8 A6.8 6.8 0 0 0 15.9 8" stroke="#fff" stroke-width="1.7" fill="none"/><path d="M9.1 15 V17.8" stroke="#fff" stroke-width="1.8"/><path d="M1.5 16.3 L16.3 2" stroke="#1a1c1e" stroke-width="3.4"/><path d="M1.5 16.3 L16.3 2" stroke="#ef4a3d" stroke-width="1.8"/></svg>
<span class="nm">尹珍</span></div></div>
<div class="tile" style="left:870px;top:620px;width:289px"><div class="av" style="background:#0a6cff;color:#fff;font-size:22px;text-align:center;line-height:81px">张胜</div><div class="lab"><svg class="mic" width="18" height="20" viewBox="0 0 18 20"><rect x="5.5" y="0.3" width="7.2" height="13.2" rx="3.6" fill="#fff"/><path d="M2.3 8 A6.8 6.8 0 0 0 15.9 8" stroke="#fff" stroke-width="1.7" fill="none"/><path d="M9.1 15 V17.8" stroke="#fff" stroke-width="1.8"/><path d="M1.5 16.3 L16.3 2" stroke="#1a1c1e" stroke-width="3.4"/><path d="M1.5 16.3 L16.3 2" stroke="#ef4a3d" stroke-width="1.8"/></svg>
<span class="nm">张胜</span></div></div>
<div class="tile" style="left:1160px;top:620px;width:288px"><div class="av"><svg width="81" height="81" viewBox="0 0 81 81"><defs></defs><rect width="81" height="81" fill="#f7f6fb"/>
<ellipse cx="18" cy="24" rx="4.5" ry="9" fill="#9a9cd8" transform="rotate(15 18 24)"/><ellipse cx="63" cy="15" rx="5" ry="8" fill="#9a9cd8" transform="rotate(-40 63 15)"/>
<path d="M20 48 C16 30 26 12 42 12 C58 12 68 30 62 52 L54 56 L28 56 Z" fill="#f2cc98"/>
<path d="M34 30 C38 26 48 26 52 30 L52 38 L34 38 Z" fill="#8290d8"/>
<ellipse cx="44" cy="48" rx="12" ry="11" fill="#fcebe0"/>
<circle cx="38" cy="48" r="1.8" fill="#b87040"/><circle cx="51" cy="46" r="1.8" fill="#b87040"/>
<path d="M36 55 L56 52" stroke="#ffffff" stroke-width="3"/>
<path d="M16 70 C20 60 28 56 36 58 L36 81 H20 Z" fill="#8fb4ea"/><path d="M56 56 C64 56 70 62 70 72 L66 81 H54 Z" fill="#8fb4ea"/>
<path d="M28 62 L34 58 L36 76 L30 76 Z M58 58 L64 62 L62 76 L56 76 Z" fill="#70c4ec"/>
<path d="M34 64 C40 60 50 60 56 64 L58 81 H32 Z" fill="#77738e"/>
<ellipse cx="22" cy="74" rx="10" ry="6" fill="#ffffff"/>
<path d="M7 54 C7 50 11 50 12 53 C13 50 17 50 17 54 C17 57 12 60 12 60 C12 60 7 57 7 54 Z" fill="#f08080"/></svg></div><div class="lab"><svg class="mic" width="18" height="20" viewBox="0 0 18 20"><rect x="5.5" y="0.3" width="7.2" height="13.2" rx="3.6" fill="#fff"/><path d="M2.3 8 A6.8 6.8 0 0 0 15.9 8" stroke="#fff" stroke-width="1.7" fill="none"/><path d="M9.1 15 V17.8" stroke="#fff" stroke-width="1.8"/><path d="M1.5 16.3 L16.3 2" stroke="#1a1c1e" stroke-width="3.4"/><path d="M1.5 16.3 L16.3 2" stroke="#ef4a3d" stroke-width="1.8"/></svg>
<span class="nm">岳治国</span></div></div>
<div class="tile" style="left:290px;top:783px;width:289px"><div class="av"><svg width="81" height="81" viewBox="0 0 81 81"><defs></defs><rect width="81" height="81" fill="#4b7bdc"/>
<rect width="81" height="26" fill="#6458b6"/>
<path d="M18 2 C30 -2 60 -2 66 8 L60 10 L54 6 L44 10 L34 14 L28 12 L20 10 Z" fill="#f0cfb2"/>
<path d="M0 26 C20 22 40 24 60 22 C70 22 76 24 81 26 V40 H0 Z" fill="#5a7ad8"/>
<path d="M0 36 C20 32 40 42 60 34 C70 32 76 34 81 36" stroke="#9aa8ee" stroke-width="1.5" fill="none"/>
<path d="M0 42 C20 40 40 48 81 50" stroke="#8fa4ea" stroke-width="2" fill="none"/>
<path d="M0 52 C30 50 50 54 81 54 V81 H0 Z" fill="#3f74d8"/>
<path d="M12 70 C30 62 60 58 81 54 V81 H12 Z" fill="#93b2ee"/></svg></div><div class="lab"><svg class="mic" width="18" height="20" viewBox="0 0 18 20"><rect x="5.5" y="0.3" width="7.2" height="13.2" rx="3.6" fill="#fff"/><path d="M2.3 8 A6.8 6.8 0 0 0 15.9 8" stroke="#fff" stroke-width="1.7" fill="none"/><path d="M9.1 15 V17.8" stroke="#fff" stroke-width="1.8"/><path d="M1.5 16.3 L16.3 2" stroke="#1a1c1e" stroke-width="3.4"/><path d="M1.5 16.3 L16.3 2" stroke="#ef4a3d" stroke-width="1.8"/></svg>
<span class="nm">高山流水王风刚</span></div></div>
<div class="tile" style="left:580px;top:783px;width:289px"><div class="av"><svg width="81" height="81" viewBox="0 0 81 81"><defs></defs><rect width="81" height="81" fill="#79afd9"/>
<path d="M4 72 C6 54 16 46 30 44 C40 44 48 48 52 56 L70 70 L66 81 H8 Z" fill="#7c88c6"/>
<path d="M28 44 C30 48 36 48 40 45" stroke="#5a68b0" stroke-width="2" fill="none"/>
<rect x="29" y="37" width="9" height="9" fill="#f2d6d0"/>
<ellipse cx="33" cy="28" rx="11.5" ry="12" fill="#f2d6d0"/>
<path d="M18 24 C16 12 24 6 34 6 C46 6 51 14 49 24 C47 20 44 18 40 20 C36 16 30 18 26 22 C24 24 22 28 21 30 Z" fill="#6c6270"/>
<circle cx="28" cy="29" r="1.6" fill="#2a2020"/><circle cx="39" cy="29" r="1.6" fill="#2a2020"/>
<path d="M40 50 C40 42 46 36 54 36 C62 36 68 42 67 52 L68 64 C68 72 64 76 56 76 L42 74 C38 66 38 58 40 50 Z" fill="#f8f8f6"/>
<path d="M42 44 C44 36 50 34 54 36 L52 46 C48 48 44 48 42 44 Z M56 36 C62 34 68 40 67 50 C62 48 58 46 56 44 Z" fill="#151515"/>
<path d="M45 37 L44 31 L49 35 Z M61 35 L65 31 L65 38 Z" fill="#151515"/>
<path d="M46 60 C50 56 56 56 60 60 L58 68 L48 68 Z" fill="#f0cfc6"/>
<path d="M40 66 L50 70 L54 81 H36 Z" fill="#7c88c6"/></svg></div><div class="lab"><svg class="mic" width="18" height="20" viewBox="0 0 18 20"><rect x="5.5" y="0.3" width="7.2" height="13.2" rx="3.6" fill="#fff"/><path d="M2.3 8 A6.8 6.8 0 0 0 15.9 8" stroke="#fff" stroke-width="1.7" fill="none"/><path d="M9.1 15 V17.8" stroke="#fff" stroke-width="1.8"/><path d="M1.5 16.3 L16.3 2" stroke="#1a1c1e" stroke-width="3.4"/><path d="M1.5 16.3 L16.3 2" stroke="#ef4a3d" stroke-width="1.8"/></svg>
<span class="nm">张红达</span></div></div>
<div class="tile" style="left:870px;top:783px;width:289px"><svg class="abs" style="left:0;top:3px" width="289" height="157" viewBox="0 0 289 157"><defs>
<radialGradient id="fs" cx=".42" cy=".5" r=".62"><stop offset="0" stop-color="#c89e8c"/><stop offset=".6" stop-color="#b48a78"/><stop offset="1" stop-color="#8a6a5a"/></radialGradient>
<linearGradient id="fb" x1="0" y1="0" x2="1" y2="0"><stop offset="0" stop-color="#f4efe2"/><stop offset=".5" stop-color="#fbfaf2"/><stop offset="1" stop-color="#f9f8ec"/></linearGradient>
</defs>
<rect width="289" height="157" fill="url(#fb)"/>
<path d="M0 0 L20 0 L24 30 L0 60 Z" fill="#ece4d4" opacity=".7"/>
<path d="M0 108 C8 104 18 106 24 112 L26 140 L0 142 Z" fill="#404240"/>
<path d="M28 157 C22 130 22 100 25 70 C24 40 30 20 48 12 C70 2 110 2 130 12 C150 24 155 50 153 80 C152 110 150 135 140 157 Z" fill="url(#fs)"/>
<path d="M25 45 C22 22 30 8 48 3 C70 -2 110 -2 132 5 C148 14 156 32 153 70 L148 64 C146 48 140 38 126 34 C110 30 80 30 56 34 C40 38 32 46 28 62 Z" fill="#423a34"/>
<path d="M36 40 C48 34 64 32 82 32" stroke="#6a564a" stroke-width="3" fill="none" opacity=".6"/>
<ellipse cx="44" cy="66" rx="11" ry="3.8" fill="#4e4a52"/><ellipse cx="98" cy="61" rx="10" ry="3.5" fill="#4a4a48"/>
<path d="M38 58 C44 54 54 54 60 58" stroke="#7a5a4c" stroke-width="2.5" fill="none"/><path d="M86 52 C94 48 104 48 112 52" stroke="#6a4c40" stroke-width="2.5" fill="none"/>
<ellipse cx="70" cy="96" rx="14" ry="10" fill="#c8a090" opacity=".8"/>
<ellipse cx="64" cy="102" rx="3" ry="2" fill="#6a4a40"/><ellipse cx="78" cy="102" rx="3" ry="2" fill="#6a4a40"/>
<path d="M46 126 C60 122 80 124 100 130" stroke="#6e4c42" stroke-width="3.5" fill="none"/>
<path d="M134 118 C150 112 170 112 190 120 C215 132 236 145 242 157 H128 C136 140 138 128 134 118 Z" fill="#4b5b3d"/>
</svg><div class="lab vid"><svg class="mic" width="18" height="20" viewBox="0 0 18 20"><rect x="5.5" y="0.3" width="7.2" height="13.2" rx="3.6" fill="#fff"/><path d="M2.3 8 A6.8 6.8 0 0 0 15.9 8" stroke="#fff" stroke-width="1.7" fill="none"/><path d="M9.1 15 V17.8" stroke="#fff" stroke-width="1.8"/><path d="M1.5 16.3 L16.3 2" stroke="#1a1c1e" stroke-width="3.4"/><path d="M1.5 16.3 L16.3 2" stroke="#ef4a3d" stroke-width="1.8"/></svg>
<span class="nm">微信用户</span></div></div>

<div class="abs" style="left:0;top:885px;width:33px;height:37px;background:#060707;border-radius:0 4px 4px 0"></div>
<svg class="abs" style="left:8px;top:892px" width="28" height="24" viewBox="0 0 28 24"><g fill="#8a8a8a"><circle cx="4.6" cy="5" r="1.2"/><rect x="9" y="4" width="14.4" height="2" rx="1"/><circle cx="8.5" cy="12.4" r="1.2"/><rect x="12.5" y="11.4" width="10.9" height="2" rx="1"/><circle cx="4.6" cy="19.9" r="1.2"/><rect x="9" y="18.9" width="14.4" height="2" rx="1"/></g></svg>

<div id="bar"></div>
<svg class="abs" style="left:20px;top:1022px" width="40" height="36" viewBox="0 0 40 36"><rect x="15.2" y="3" width="9.9" height="19.8" rx="4.95" fill="#48494e"/><path d="M11.2 17 A8.9 8.9 0 0 0 29 17" stroke="#48494e" stroke-width="2.6" fill="none"/><path d="M20.1 26 V30.5" stroke="#48494e" stroke-width="2.4"/><rect x="12.7" y="30.3" width="14.6" height="2.5" rx="1.2" fill="#48494e"/></svg>
<div class="bl" style="left:27px">静音</div>
<svg class="caret" style="left:76px" width="13" height="9" viewBox="0 0 13 9"><path d="M1.5 7.2 L6.5 2.2 L11.5 7.2" stroke="#4a4b50" stroke-width="1.9" fill="none"/></svg>

<svg class="abs" style="left:110px;top:1022px" width="40" height="30" viewBox="0 0 40 30"><rect x="6" y="5.8" width="21" height="20" rx="2.4" fill="#48494e"/><path d="M28.8 11.8 L35.3 7.5 Q36 7.2 36 8 V24 Q36 24.8 35.3 24.4 L28.8 20 Z" fill="#48494e"/><path d="M7.5 27 L29 5.5" stroke="#fff" stroke-width="4.8"/><path d="M8 26.4 L28.5 6" stroke="#ff3b35" stroke-width="2.6" stroke-linecap="round"/></svg>
<div class="bl" style="left:104px">开启视频</div>
<svg class="caret" style="left:167px" width="13" height="9" viewBox="0 0 13 9"><path d="M1.5 7.2 L6.5 2.2 L11.5 7.2" stroke="#4a4b50" stroke-width="1.9" fill="none"/></svg>

<svg class="abs" style="left:385px;top:1020px" width="36" height="34" viewBox="0 0 36 34"><rect x="4" y="5" width="28.8" height="21.6" rx="2.6" fill="#48494e" stroke="#0bc760" stroke-width="2"/><rect x="10.5" y="29.2" width="15" height="2.5" rx="1.25" fill="#48494e"/><path d="M12.5 21 C13 16.5 15.5 14.2 19.8 14 V11.3 L24.2 15.4 L19.8 19.5 V16.8 C16.8 16.8 14.5 18.3 12.5 21 Z" fill="#fff"/></svg>
<div class="bl" style="left:376px">共享屏幕</div>
<svg class="caret" style="left:438px" width="13" height="9" viewBox="0 0 13 9"><path d="M1.5 7.2 L6.5 2.2 L11.5 7.2" stroke="#4a4b50" stroke-width="1.9" fill="none"/></svg>

<svg class="abs" style="left:476px;top:1020px" width="32" height="34" viewBox="0 0 32 34"><path d="M15.9 4.2 L26.9 8.6 Q27.3 8.8 27.3 9.2 V19.5 C27.3 25 22 29 15.9 31.4 C9.8 29 4.5 25 4.5 19.5 V9.2 Q4.5 8.8 4.9 8.6 Z" fill="#48494e"/><path d="M11 16.2 L15.9 11.4 L20.8 16.2 M11.4 21.2 L15.9 16.8 L20.4 21.2 Z" stroke="#fff" stroke-width="2" fill="none"/><path d="M11.4 21.2 L15.9 16.8 L20.4 21.2 Z" fill="#fff"/></svg>
<div class="bl" style="left:479px">安全</div>

<svg class="abs" style="left:550px;top:1020px" width="34" height="34" viewBox="0 0 34 34"><circle cx="15.9" cy="10.4" r="5.1" fill="#48494e"/><path d="M3.5 30.4 C3.7 22.5 8.5 17.8 15.9 17.6 C19 17.6 21.5 18.4 23.5 19.8 C20.5 21.5 18.5 24.5 18.5 28 C18.5 28.8 18.6 29.6 18.8 30.4 Z" fill="#48494e"/><circle cx="24.5" cy="24.4" r="6.4" fill="#48494e" stroke="#fff" stroke-width="1.2"/><path d="M24.5 21 V27.8 M21.1 24.4 H27.9" stroke="#fff" stroke-width="1.7"/></svg>
<div class="bl" style="left:553px">邀请</div>

<div class="abs" style="left:606px;top:1020px;width:88px;height:55px;background:#e1e2e6;border-radius:6px"></div>
<svg class="abs" style="left:634px;top:1020px" width="34" height="34" viewBox="0 0 34 34"><circle cx="15.9" cy="10.3" r="5.2" fill="#48494e"/><path d="M21.3 5.8 A5.8 5.8 0 0 1 21.3 14.8" stroke="#48494e" stroke-width="0.9" fill="none"/><path d="M3.5 30.2 C3.8 22 8.8 16.8 15.9 16.8 C23 16.8 28 22 28.3 30.2 Z" fill="#48494e"/><path d="M24 18.5 C27.5 20.5 29.5 24.5 29.8 30.2" stroke="#48494e" stroke-width="0.9" fill="none"/></svg>
<div class="bl" style="left:612px">管理成员(23)</div>

<svg class="abs" style="left:717px;top:1020px" width="34" height="34" viewBox="0 0 34 34"><path d="M6.8 8 Q4.6 8 4.6 10.2 V25.7 Q4.6 27.9 6.8 27.9 H21 V31.5 L29.4 27.7 V10.2 Q29.4 8 27.2 8 Z" fill="#48494e"/><circle cx="10" cy="17.4" r="1.9" fill="#fff"/><circle cx="16.5" cy="17.4" r="1.9" fill="#fff"/><circle cx="22.8" cy="17.4" r="1.9" fill="#fff"/></svg>
<div class="bl" style="left:721px">聊天</div>

<svg class="abs" style="left:792px;top:1022px" width="32" height="32" viewBox="0 0 32 32"><circle cx="16" cy="15.9" r="12.9" stroke="#48494e" stroke-width="1.9" fill="none"/><circle cx="16" cy="15.9" r="10.1" fill="#48494e"/></svg>
<div class="bl" style="left:795px">录制</div>
<svg class="caret" style="left:843px" width="13" height="9" viewBox="0 0 13 9"><path d="M1.5 7.2 L6.5 2.2 L11.5 7.2" stroke="#4a4b50" stroke-width="1.9" fill="none"/></svg>

<svg class="abs" style="left:880px;top:1020px" width="34" height="34" viewBox="0 0 34 34"><rect x="11.2" y="5.3" width="12.1" height="9.5" rx="2" fill="#48494e"/><rect x="3.1" y="17.8" width="12.2" height="10.9" rx="2" fill="#48494e"/><rect x="18" y="17.8" width="12.9" height="10.9" rx="2" fill="#48494e"/></svg>
<div class="bl" style="left:871px">分组讨论</div>

<svg class="abs" style="left:956px;top:1020px" width="34" height="34" viewBox="0 0 34 34"><rect x="3.5" y="5.6" width="10.7" height="10.7" rx="2" fill="#48494e"/><rect x="3.5" y="19" width="10.7" height="11" rx="2" fill="#48494e"/><rect x="16.8" y="19" width="11.8" height="11" rx="2" fill="#48494e"/><path d="M23.3 4.9 L28.8 10.7 L23.3 16.5 L17.8 10.7 Z" stroke="#48494e" stroke-width="1.7" fill="none" stroke-linejoin="round"/></svg>
<div class="bl" style="left:958px">应用</div>

<svg class="abs" style="left:1030px;top:1021px" width="34" height="34" viewBox="0 0 34 34"><path id="gear" fill="#48494e" fill-rule="evenodd" d="M26.94 14.03 L30.13 14.44 L30.13 19.76 L26.94 20.17 L26.20 21.95 L28.17 24.50 L24.40 28.27 L21.85 26.30 L20.07 27.04 L19.66 30.23 L14.34 30.23 L13.93 27.04 L12.15 26.30 L9.60 28.27 L5.83 24.50 L7.80 21.95 L7.06 20.17 L3.87 19.76 L3.87 14.44 L7.06 14.03 L7.80 12.25 L5.83 9.70 L9.60 5.93 L12.15 7.90 L13.93 7.16 L14.34 3.97 L19.66 3.97 L20.07 7.16 L21.85 7.90 L24.40 5.93 L28.17 9.70 L26.20 12.25 Z M22.30 17.10 A5.30 5.30 0 1 0 11.70 17.10 A5.30 5.30 0 1 0 22.30 17.10 Z"/></svg>
<div class="bl" style="left:1034px">设置</div>

<div class="abs" style="left:1340px;top:1026px;width:95px;height:45px;border:1px solid #f45a5a;border-radius:4px;color:#f04848;font-size:17px;text-align:center;line-height:45px">结束会议</div>

</body></html>
